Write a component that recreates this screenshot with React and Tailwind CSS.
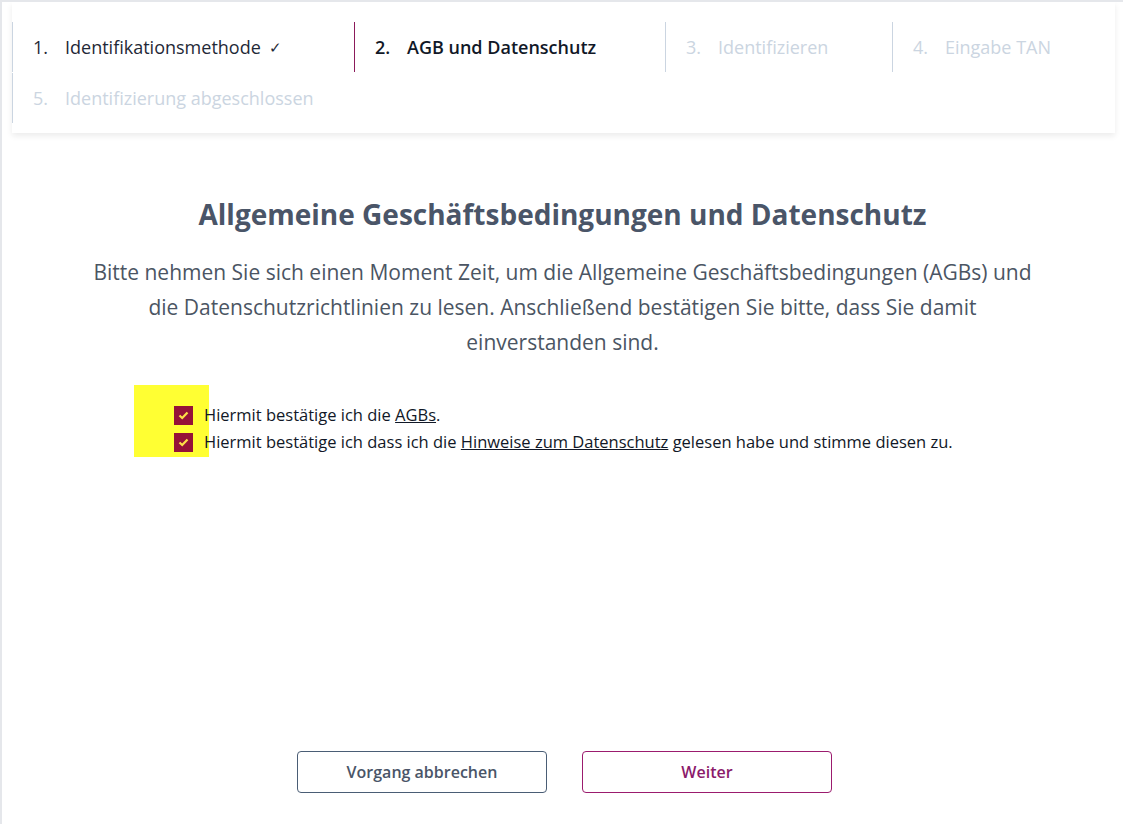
export default function App() {
  const f = { fontFamily: '"Open Sans", "Noto Sans", sans-serif' };
  const step = (n, label, cls, extra) => (
    <div className={`flex items-center h-[50px] border-l ${cls}`}>
      <span className="pl-[20px] w-[52px]">{n}.</span>
      <span>{label}</span>
      {extra}
    </div>
  );
  return (
    <div style={f} className="w-[1123px] h-[824px] bg-white border-t-2 border-l-2 border-[#e5e7eb] overflow-hidden relative">
      <div className="mx-[10px] w-[1103px] bg-white shadow-[0_3px_6px_rgba(0,0,0,0.08)] pt-[20px] pb-[10px] text-[18px]">
        <div className="flex flex-wrap gap-y-[1px]">
          <div className="w-[342px]">{step(1, "Identifikationsmethode", "border-[#cbd5e1] text-[#1f2937]", <span className="ml-[8px] text-[15px]">✓</span>)}</div>
          <div className="w-[311px]">{step(2, "AGB und Datenschutz", "border-[#8b1a5a] text-[#111827] font-semibold")}</div>
          <div className="w-[227px]">{step(3, "Identifizieren", "border-[#cbd5e1] text-[#cbd5e1]")}</div>
          <div className="w-[223px]">{step(4, "Eingabe TAN", "border-[#cbd5e1] text-[#cbd5e1]")}</div>
          <div className="w-[342px]">{step(5, "Identifizierung abgeschlossen", "border-[#cbd5e1] text-[#cbd5e1]")}</div>
        </div>
      </div>
      <h1 className="mt-[60px] text-center text-[28px] font-bold text-[#4a5568]">Allgemeine Geschäftsbedingungen und Datenschutz</h1>
      <p className="mt-[20px] mx-auto w-[1080px] text-center text-[21px] leading-[35px] text-[#4b5563]">
        Bitte nehmen Sie sich einen Moment Zeit, um die Allgemeine Geschäftsbedingungen (AGBs) und<br />die Datenschutzrichtlinien zu lesen. Anschließend bestätigen Sie bitte, dass Sie damit<br />einverstanden sind.
      </p>
      <div className="relative mt-[45px] ml-[172px] text-[16.5px] text-[#111827] flex flex-col gap-[7px]">
        <div className="absolute left-[-40px] top-[-20px] w-[75px] h-[72px] bg-[#ffff33]"></div>
        {[
          <>Hiermit bestätige ich die <u>AGBs</u>.</>,
          <>Hiermit bestätige ich dass ich die <u>Hinweise zum Datenschutz</u> gelesen habe und stimme diesen zu.</>,
        ].map((t, i) => (
          <div key={i} className="relative flex items-center gap-[11px] h-[20px]">
            <span className="w-[19px] h-[19px] bg-[#951238] flex items-center justify-center">
              <svg width="11" height="9" viewBox="0 0 11 9"><path d="M1.5 4.5 L4.2 7 L9.5 1.5" stroke="#fde047" strokeWidth="2.2" fill="none"/></svg>
            </span>
            <span>{t}</span>
          </div>
        ))}
      </div>
      <div className="absolute left-[295px] top-[749px] flex gap-[35px]">
        <button className="w-[250px] h-[42px] border border-[#4a5d75] rounded-[4px] text-[16px] font-semibold text-[#4a5568]">Vorgang abbrechen</button>
        <button className="w-[250px] h-[42px] border border-[#9b1b6e] rounded-[4px] text-[16px] font-semibold text-[#8b1a6b]">Weiter</button>
      </div>
    </div>
  );
}
